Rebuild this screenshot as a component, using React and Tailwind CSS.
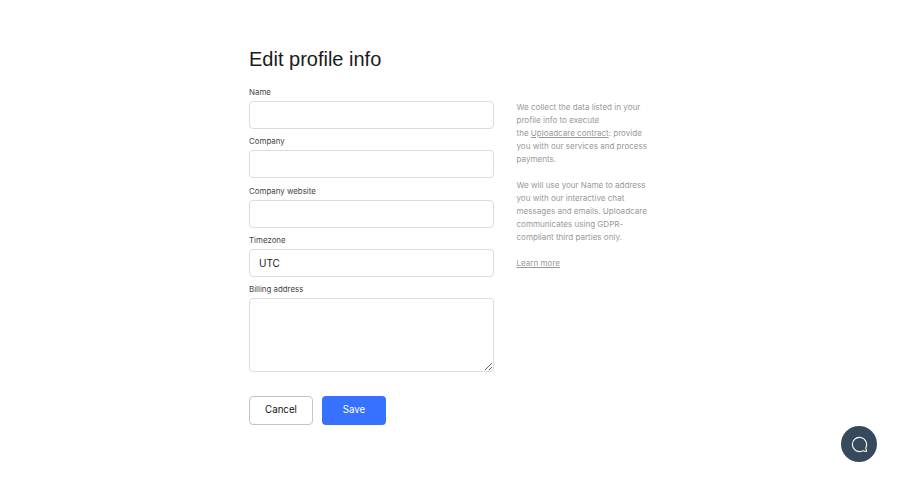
import React from 'react';
import { MessageCircle } from 'lucide-react';

const fields = ['Name', 'Company', 'Company website'];

function App() {
  return (
    <div className="relative h-[484px] w-[900px] overflow-hidden bg-white font-['Inter',sans-serif] text-[#1a1a1a]">
      <div className="flex pl-[249px] pt-[46px]">
        <form className="w-[245px]">
          <h1 className="mb-[15px] font-['Liberation_Sans',sans-serif] text-[20px] leading-[26px] font-normal">Edit profile info</h1>
          {fields.map(function(field) {
            return (
              <div key={field} className="mb-[7.3px]">
                <label className="mb-[3px] block text-[7.9px] leading-[11px] text-[#444]">{field}</label>
                <input className="block h-[28px] w-full rounded-[4px] border border-[#dcdcdc] bg-white px-[9px]" />
              </div>
            );
          })}
          <div className="mb-[7.3px]">
            <label className="mb-[3px] block text-[7.9px] leading-[11px] text-[#444]">Timezone</label>
            <input
              readOnly
              value="UTC"
              className="block h-[28px] w-full rounded-[4px] border border-[#dcdcdc] bg-white px-[9px] pt-[1px] text-[10px] text-[#1a1a1a]"
            />
          </div>
          <div>
            <label className="mb-[3px] block text-[7.9px] leading-[11px] text-[#444]">Billing address</label>
            <textarea className="block h-[74px] w-full rounded-[4px] border border-[#dcdcdc] bg-white" />
          </div>
          <div className="mt-[24px] flex gap-[9px]">
            <button type="button" className="h-[29px] w-[64px] rounded-[4px] border border-[#c4c4c4] bg-white text-[9.7px] text-[#111]">Cancel</button>
            <button type="button" className="h-[29px] w-[64px] rounded-[4px] bg-[#3771ff] text-[9.7px] text-white">Save</button>
          </div>
        </form>
        <aside className="ml-[22.5px] w-[134px] pt-[55px] text-[8.05px] leading-[13px] text-[#999]">
          <p>We collect the data listed in your profile info to execute<br />the <a className="underline">Uploadcare contract</a>: provide you with our services and process payments.</p>
          <p className="mt-[13px]">We will use your Name to address you with our interactive chat messages and emails. Uploadcare communicates using GDPR-compliant third parties only.</p>
          <p className="mt-[13px]"><a className="underline">Learn more</a></p>
        </aside>
      </div>
      <button type="button" className="absolute left-[841px] top-[426px] flex h-[36px] w-[36px] items-center justify-center rounded-full bg-[#37495c]">
        <MessageCircle size={17} strokeWidth={1.5} className="-scale-x-100 text-white" />
      </button>
    </div>
  );
}

export default App;
